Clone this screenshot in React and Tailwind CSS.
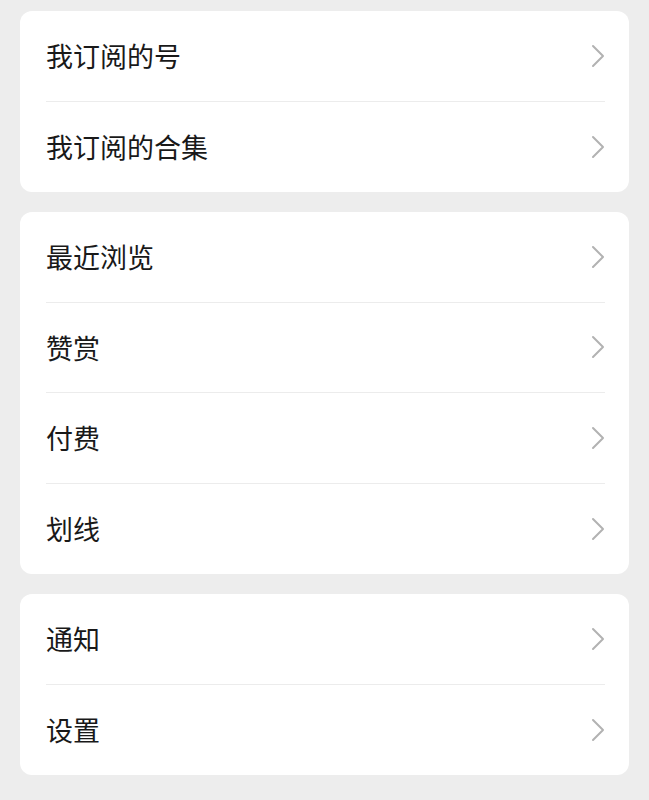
const groups = [
  ["我订阅的号", "我订阅的合集"],
  ["最近浏览", "赞赏", "付费", "划线"],
  ["通知", "设置"],
];

function Chevron() {
  return (
    <svg width="14" height="24" viewBox="0 0 14 24" fill="none">
      <polyline
        points="2,2 12,12 2,22"
        stroke="#b2b2b2"
        strokeWidth="2"
        strokeLinecap="round"
        strokeLinejoin="round"
      />
    </svg>
  );
}

export default function App() {
  return (
    <div
      className="min-h-[800px] bg-[#ededed] px-[20px] pt-[11px] pb-[24px] flex flex-col gap-[20px]"
      style={{ fontFamily: '"Noto Sans CJK SC", "Noto Sans", sans-serif' }}
    >
      {groups.map((items, gi) => (
        <div key={gi} className="bg-white rounded-[12px] pl-[26px] pr-[24px]">
          {items.map((label, i) => (
            <div
              key={label}
              className={
                "h-[90.5px] flex items-center justify-between " +
                (i < items.length - 1 ? "border-b border-[#ececec]" : "")
              }
            >
              <span className="text-[27px] leading-none text-[#191919]">{label}</span>
              <Chevron />
            </div>
          ))}
        </div>
      ))}
    </div>
  );
}
